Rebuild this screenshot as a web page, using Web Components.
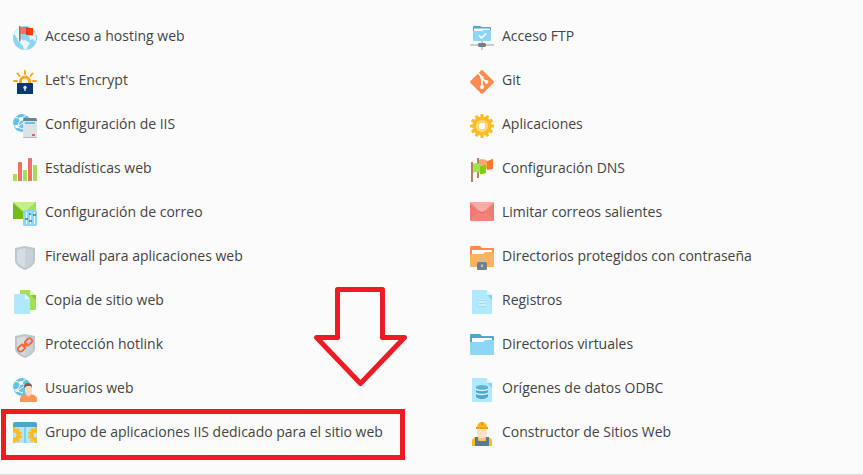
<!DOCTYPE html>
<html lang="es">
<head>
<meta charset="utf-8">
<meta name="viewport" content="width=device-width, initial-scale=1">
<title>Sitios web y dominios</title>
<style>
  body {
    margin: 0;
    background: #fbfbfb;
    color: #444;
    font: 14px/20px "Open Sans", "Noto Sans", sans-serif;
  }
</style>
</head>
<body>
<tool-panel>
  <tool-list>
    <tool-link icon="hosting">Acceso a hosting web</tool-link>
    <tool-link icon="encrypt">Let's Encrypt</tool-link>
    <tool-link icon="iis">Configuración de IIS</tool-link>
    <tool-link icon="stats">Estadísticas web</tool-link>
    <tool-link icon="mailConfig">Configuración de correo</tool-link>
    <tool-link icon="firewall">Firewall para aplicaciones web</tool-link>
    <tool-link icon="copy">Copia de sitio web</tool-link>
    <tool-link icon="hotlink">Protección hotlink</tool-link>
    <tool-link icon="users">Usuarios web</tool-link>
    <tool-link icon="pool" marked>Grupo de aplicaciones IIS dedicado para el sitio web</tool-link>
  </tool-list>
  <tool-list>
    <tool-link icon="ftp">Acceso FTP</tool-link>
    <tool-link icon="git">Git</tool-link>
    <tool-link icon="apps">Aplicaciones</tool-link>
    <tool-link icon="dns">Configuración DNS</tool-link>
    <tool-link icon="mailLimit">Limitar correos salientes</tool-link>
    <tool-link icon="protectedDir">Directorios protegidos con contraseña</tool-link>
    <tool-link icon="logs">Registros</tool-link>
    <tool-link icon="virtualDir">Directorios virtuales</tool-link>
    <tool-link icon="odbc">Orígenes de datos ODBC</tool-link>
    <tool-link icon="builder">Constructor de Sitios Web</tool-link>
  </tool-list>
</tool-panel>

<script>
// shared pieces
const netGlobe = `
  <circle cx="9" cy="9" r="9" fill="#64c3ec"/>
  <path d="M8 5 2 3M8 5l5-4M8 5l-4 8M8 5l6 3M4 13l-4-2M4 13l6 2M13 7l5-2M4 13l9-6" fill="none" stroke="#fbfbfb"/>
  <circle cx="8" cy="5" r="2" fill="#fbfbfb"/>
  <circle cx="4" cy="12.5" r="1.7" fill="#fbfbfb"/>`;

const shield = `
  <path d="M12 0c-2 0-3 1-5 1L2 2v12c0 5 5 8 10 10 5-2 10-5 10-10V2l-5-1c-2 0-3-1-5-1z" fill="#bdc6cb"/>
  <path d="M12 2 4 4v10c0 4 4 6 8 8z" fill="#d5dde1"/>
  <path d="m12 2 8 2v10c0 4-4 6-8 8z" fill="#c8d1d6"/>`;

const sheet = `
  <path d="M3 0h13l6 5v18a1 1 0 0 1-1 1H3a1 1 0 0 1-1-1V1a1 1 0 0 1 1-1z" fill="#b0e8ff"/>
  <path d="m17 5 5 5V5z" fill="#8fcde8"/>
  <path d="M17 0v5h5z" fill="#dbf4ff"/>`;

const folder = (back, front) => `
  <path d="M1 0h9l2 2h11a1 1 0 0 1 1 1v8H0V1a1 1 0 0 1 1-1z" fill="${back}"/>
  <path d="M2 4h20v5H2z" fill="#fff"/>
  <path d="M0 8h12c2 0 2-2 4-2h8v14a1 1 0 0 1-1 1H1a1 1 0 0 1-1-1z" fill="${front}"/>`;

const teeth = (n, cx, cy, r) => Array.from({ length: n }, (_, i) =>
  `<path d="M${cx - 1.3} ${cy - r}h2.6l.7 4h-4z" transform="rotate(${i * 360 / n} ${cx} ${cy})"/>`).join('');

const icons = {
  hosting: `
    <circle cx="12" cy="12" r="12" fill="#8dd5f5"/>
    <path d="M1 8c1-3 3-5 6-7v12l3 1-2 2-3-1-1-3zM8 15l4-1 5 3-2 3-1 3-3 1-1-4-3-3zM16 10h4l1-5 2 3-1 2 1 2-1 4-2-3-3 1z" fill="#e8f7fe"/>
    <path d="M7 1h8v7H7z" fill="#ff6f69"/>
    <path d="M13 2h7v7h-7z" fill="#ff3c00"/>
    <path d="m13 2 2-1v7l-2 1z" fill="#d33b24"/>
    <path d="M6 0h1.5v15H6z" fill="#a3705b"/>`,
  encrypt: `
    <g stroke="#ffa61a" stroke-width="2" stroke-linecap="round">
      <path d="M12 1v3M4.500 3.500l2 2.500M19.500 3.500l-2 2.500M1 11h3M20 11h3"/>
    </g>
    <path d="M7.500 14v-2.500a4.500 4.500 0 0 1 9 0V14" fill="none" stroke="#ffa61a" stroke-width="3"/>
    <path d="M5 13h14a1 1 0 0 1 1 1v10H4V14a1 1 0 0 1 1-1z" fill="#003a70"/>
    <circle cx="12" cy="17.5" r="1.7" fill="#dfe8f0"/>
    <path d="M11.300 18h1.400v3h-1.400z" fill="#dfe8f0"/>`,
  iis: `${netGlobe}
    <path d="M11 4h12l1 2v18H10V6z" fill="#dce3e6"/>
    <path d="M11 4h12l1 2v1H10V6z" fill="#738087"/>
    <path d="M10 23h14v1H10z" fill="#b4bfc4"/>
    <path d="M12 8h10v2H12z" fill="#64c3ec"/>
    <path d="M19 20h3v2h-3z" fill="#ff5a4f"/>`,
  stats: `
    <path d="M0 17a1 1 0 0 1 1-1h3v7H0zM10 12h4v11h-4zM20 7h3a1 1 0 0 1 1 1v15h-4z" fill="#a5e052"/>
    <path d="M5 5a1 1 0 0 1 1-1h2a1 1 0 0 1 1 1v18H5zM15 1a1 1 0 0 1 1-1h2a1 1 0 0 1 1 1v22h-4z" fill="#ee7067"/>`,
  mailConfig: `
    <path d="M0 0h23v17H0z" fill="#a4e24b"/>
    <path d="M0 17V1l9 8zM0 17l9-8 3 2 3-2 8 8z" fill="#75bd16"/>
    <path d="m0 0 11.500 10L23 0z" fill="#c5f083"/>
    <rect x="10" y="8" width="14" height="16" rx="1.5" fill="#8dd6f7"/>
    <path d="M13.500 10v12M17.500 10v12M21.500 10v12" stroke="#e8f8ff"/>
    <path d="M12 17h3M16 19h3M20 13h3M16 12h2" stroke="#327fa3" stroke-width="1.5"/>`,
  firewall: shield,
  copy: `
    <path d="M8 0h9l6 6v13a1 1 0 0 1-1 1H8a1 1 0 0 1-1-1V1a1 1 0 0 1 1-1z" fill="#a5e052"/>
    <path d="m18 5 5 5V5z" fill="#83c334"/>
    <path d="M17 0v5h6z" fill="#ddf7b9"/>
    <path d="M2 4h10l5 5v14a1 1 0 0 1-1 1H2a1 1 0 0 1-1-1V5a1 1 0 0 1 1-1z" fill="#b0e8ff"/>
    <path d="M12 4v5h5z" fill="#e3f7ff"/>`,
  hotlink: `${shield}
    <g fill="none" stroke="#ff6433" stroke-width="1.8" transform="rotate(-42 12 11)">
      <rect x="3.5" y="8.5" width="7.5" height="5" rx="2"/>
      <rect x="13" y="8.5" width="7.5" height="5" rx="2"/>
      <path d="M9 11h6"/>
    </g>`,
  users: `${netGlobe}
    <path d="M7 24v-3c0-3 3-4 6-5h5c3 1 6 2 6 5v2a1 1 0 0 1-1 1z" fill="#ff9457"/>
    <path d="M13 14h5v3c-1 2-4 2-5 0z" fill="#f5c6a5"/>
    <path d="M12 8h7v5c0 3-2 4-3.500 4S12 16 12 13z" fill="#ffdcc2"/>
    <path d="M11 10V8c0-4 8-4 8 0v2l-1-2h-4z" fill="#7d5f55"/>`,
  pool: `
    <path d="M0 5h24v16H0z" fill="#b0e8ff"/>
    <path d="M0 5V2a2 2 0 0 1 2-2h20a2 2 0 0 1 2 2v3z" fill="#4da6cf"/>
    <path d="M11 5h2v16h-2z" fill="#84cfec"/>
    <clipPath id="doors"><path d="M0 5h24v16H0z"/></clipPath>
    <g clip-path="url(#doors)" fill="#fdbb24">
      ${teeth(10, 1, 13, 8)}${teeth(10, 23, 13, 8)}
      <g fill="#b0e8ff" stroke="#fdbb24" stroke-width="3">
        <circle cx="1" cy="13" r="4"/>
        <circle cx="23" cy="13" r="4"/>
      </g>
    </g>`,
  ftp: `
    <path d="M3 1a1 1 0 0 1 1-1h6l2 1h8a1 1 0 0 1 1 1v6H3z" fill="#4da6cf"/>
    <path d="M4 2.500h16V7H4z" fill="#fff"/>
    <path d="M3 5h9l2-1h7v10a1 1 0 0 1-1 1H4a1 1 0 0 1-1-1z" fill="#8dd6f7"/>
    <path d="m9 9.500 2.500 2.500L16 7.500" fill="none" stroke="#fff" stroke-width="1.5"/>
    <path d="M11 15h2v9h-2zM0 18h24v2H0z" fill="#c4ced3"/>
    <path d="M9 17h6l1 1v2l-1 1H9l-1-1v-2z" fill="#738087"/>`,
  git: `
    <path d="M10.800.7a1.700 1.700 0 0 1 2.400 0l10.100 10.100a1.700 1.700 0 0 1 0 2.400L13.200 23.300a1.700 1.700 0 0 1-2.400 0L.7 13.200a1.700 1.700 0 0 1 0-2.400z" fill="#ff8b4f"/>
    <path d="m8 3 4 4v10M12 8l4 4" fill="none" stroke="#fff" stroke-width="1.6"/>
    <circle cx="12" cy="7.5" r="1.8" fill="#fff"/>
    <circle cx="12" cy="17" r="1.9" fill="#fff"/>
    <circle cx="16.5" cy="12" r="1.9" fill="#fff"/>`,
  apps: `
    <g fill="#fdbb24">${teeth(12, 12, 12, 12)}</g>
    <circle cx="12" cy="12" r="9.5" fill="#fdbb24"/>
    <circle cx="12" cy="12" r="5" fill="none" stroke="#ffdb83" stroke-width="2"/>
    <circle cx="12" cy="12" r="3.5" fill="#fbfbfb"/>`,
  dns: `
    <path d="M7 0h2v20H7z" fill="#b77f67"/>
    <path d="M9 2c3-2 5 0 8 0v9c-3 0-5-1-8 0z" fill="#ffa66b"/>
    <path d="M17 3c2 0 4-2 6-2v10c-2 0-4 1-6 1z" fill="#ff7733"/>
    <path d="M1 4h2v20H1z" fill="#b77f67"/>
    <path d="M3 6c3-2 5 0 8 0v9c-3 0-5-2-8 0z" fill="#a5e052"/>
    <path d="M10 8c2 1 4-1 6-1v8c-2 0-4 2-6 1z" fill="#7fcc11"/>`,
  mailLimit: `
    <rect width="24" height="19" rx="1" fill="#f58780"/>
    <path d="M0 18V2l9 8zM24 18V2l-9 8z" fill="#ee7a73"/>
    <path d="m0 18 9-8 3 2 3-2 9 8-1 1H1z" fill="#f3827b"/>
    <path d="m0 0 10 9.500c1 1 3 1 4 0L24 0z" fill="#ffaaa4"/>
    <path d="m9 8.500 1 1c1 1 3 1 4 0l1-1v1l-1 1c-1 1-3 1-4 0l-1-1z" fill="#d9605a"/>`,
  protectedDir: `${folder('#ff8b4f', '#ffb35c')}
    <path d="M9.500 17v-1.500a2.500 2.500 0 0 1 5 0V17" fill="none" stroke="#b4c0c6" stroke-width="1.5"/>
    <rect x="7" y="16" width="10" height="8" rx="1.5" fill="#738087"/>
    <path d="M11.500 18.500h1v2.500h-1z" fill="#fff"/>`,
  logs: `${sheet}
    <path d="M9 9h7v8H9z" fill="#c9f0ff"/>
    <path d="M7 9.500h1M7 12.500h1M7 15.500h1M9 10.500h7M9 13.500h7M9 16.500h7" stroke="#a0d8ee"/>`,
  virtualDir: folder('#4da6cf', '#8dd6f7'),
  odbc: `${sheet}
    <path d="M6 9v9c0 4 12 4 12 0V9z" fill="#4da6cf"/>
    <ellipse cx="12" cy="9" rx="6" ry="2" fill="#5db4da"/>
    <path d="M6 11c2 2 10 2 12 0M6 15c2 2 10 2 12 0" fill="none" stroke="#d8f3ff" stroke-width="1.3"/>`,
  builder: `
    <path d="M2 24v-5c0-3 3-4 6-4h8c3 0 6 1 6 4v5z" fill="#fdbb24"/>
    <path d="M5 15h3v4h8v-4h3v9H5z" fill="#547a99"/>
    <path d="M8 14h8v3c-2 2-6 2-8 0z" fill="#f5c6a5"/>
    <path d="M7 6h10v5c0 3-3 5-5 5s-5-2-5-5z" fill="#ffe1c7"/>
    <path d="M7 6c0-8 10-8 10 0z" fill="#fdb71a"/>
    <path d="M6 5h12v2H6z" fill="#f99d1c"/>
    <path d="M11 0h2v3h-2z" fill="#ff9100"/>`
};

class ToolPanel extends HTMLElement {
  constructor() {
    super();
    this.attachShadow({ mode: 'open' });
    this.shadowRoot.innerHTML = `
      <style>
        :host {
          display: block;
          position: relative;
          border-bottom: 1px solid #d9d9d9;
        }
        nav {
          display: grid;
          grid-template-columns: 1fr 1fr;
          gap: 64px;
          padding: 26px 0 28px 13px;
        }
        .arrow {
          position: absolute;
          left: 313px;
          bottom: 87px;
          width: 94px;
          height: 100px;
          pointer-events: none;
        }
      </style>
      <nav><slot></slot></nav>
      <svg class="arrow" viewBox="0 0 94 100" aria-hidden="true">
        <path d="M24.500 2.500h45v48h22l-44 46-44-46h21z" fill="none" stroke="#ed1c24" stroke-width="5" stroke-linejoin="round"/>
      </svg>
    `;
  }
}

class ToolList extends HTMLElement {
  constructor() {
    super();
    this.attachShadow({ mode: 'open' });
    this.shadowRoot.innerHTML = `
      <style>
        :host {
          display: flex;
          flex-direction: column;
          align-items: flex-start;
          gap: 20px;
        }
      </style>
      <slot></slot>
    `;
  }
}

class ToolLink extends HTMLElement {
  constructor() {
    super();
    this.attachShadow({ mode: 'open' });
    this.render();
  }

  render() {
    this.shadowRoot.innerHTML = `
      <style>
        :host {
          display: block;
          position: relative;
        }
        :host([marked])::after {
          content: "";
          position: absolute;
          inset: -13px -22px -14px -12px;
          border: 5px solid #ed1c24;
          pointer-events: none;
        }
        a {
          display: flex;
          align-items: flex-start;
          gap: 8px;
          color: inherit;
          text-decoration: none;
        }
        a:hover {
          text-decoration: underline;
        }
        svg {
          flex: none;
          width: 24px;
          height: 24px;
        }
      </style>
      <a href="#${this.getAttribute('icon')}">
        <svg viewBox="0 0 24 24" aria-hidden="true">${icons[this.getAttribute('icon')]}</svg>
        <span><slot></slot></span>
      </a>
    `;
  }
}

customElements.define('tool-panel', ToolPanel);
customElements.define('tool-list', ToolList);
customElements.define('tool-link', ToolLink);
</script>
</body>
</html>
